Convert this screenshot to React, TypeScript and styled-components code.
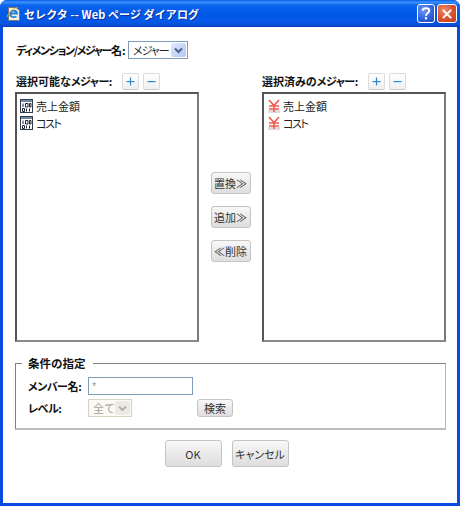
import React from "react";
import styled, { createGlobalStyle } from "styled-components";

const Global = createGlobalStyle`
  html, body { margin: 0; padding: 0; background: #fff; }
  body { font-family: "Noto Sans CJK JP", "Liberation Sans", sans-serif; }
`;

const Win = styled.div`
  width: 460px;
  height: 506px;
  display: flex;
  flex-direction: column;
  box-sizing: border-box;
  border-radius: 7px 7px 0 0;
  background: #0a4ae0;
  overflow: hidden;
`;
const TitleBar = styled.div`
  height: 27px;
  flex: none;
  display: flex;
  align-items: center;
  box-sizing: border-box;
  padding: 0 3px 0 5px;
  gap: 2px;
  background: linear-gradient(180deg, #0a5be6 0%, #3a93ff 8%, #0f66ee 18%, #0058e6 50%, #0559e8 80%, #0a4fd8 92%, #0a3fc0 100%);
`;
const TitleText = styled.div`
  flex: 1;
  color: #fff;
  font-size: 11px;
  font-weight: 700;
  letter-spacing: 0.1px;
  white-space: pre;
  text-shadow: 1px 1px 0 #0f2f9c;
`;
const CapBtn = styled.div<{ $close?: boolean }>`
  width: ${(p) => (p.$close ? 20 : 18)}px;
  height: 19px;
  box-sizing: border-box;
  border: 1px solid #fff;
  border-radius: 3px;
  display: flex;
  align-items: center;
  justify-content: center;
  background: ${(p) =>
    p.$close
      ? "radial-gradient(circle at 35% 30%, #ee8a6c, #d9502c 55%, #c23a1a)"
      : "radial-gradient(circle at 35% 30%, #6f96f2, #2c5fdd 60%, #1f49bf)"};
`;
const Client = styled.div`
  flex: 1;
  margin: 0 3px 3px;
  background: #fff;
  box-sizing: border-box;
  padding: 14px 11px 0 12px;
  display: flex;
  flex-direction: column;
`;
const DimRow = styled.div`
  display: flex;
  align-items: center;
  height: 18px;
  padding-left: 1px;
`;
const Label = styled.span`
  font-size: 11px;
  font-weight: 700;
  color: #111;
  white-space: nowrap;
  line-height: 16px;
  font-feature-settings: "palt";
`;
const Kana = styled.span<{ $t?: number }>`
  letter-spacing: ${(p) => p.$t ?? -0.5}px;
  font-feature-settings: "palt";
`;
const DimLabel = styled(Label)`
  width: 112px;
  flex: none;
`;
const FakeSelect = styled.div<{ $w: number; $disabled?: boolean }>`
  width: ${(p) => p.$w}px;
  height: 18px;
  flex: none;
  box-sizing: border-box;
  border: 1px solid ${(p) => (p.$disabled ? "#d6d3c4" : "#7f9db9")};
  background: ${(p) => (p.$disabled ? "#faf9f4" : "#fff")};
  color: ${(p) => (p.$disabled ? "#a5a295" : "#222")};
  display: flex;
  align-items: center;
  justify-content: space-between;
  font-size: 11px;
  line-height: 16px;
  padding-left: 4px;
  white-space: nowrap;
`;
const SelectArrow = styled.div<{ $disabled?: boolean }>`
  width: 15px;
  height: 14px;
  flex: none;
  margin-right: 1px;
  border-radius: 2px;
  display: flex;
  align-items: center;
  justify-content: center;
  background: ${(p) => (p.$disabled ? "#ecebe3" : "linear-gradient(135deg,#e1eafe,#b0c6f5)")};
`;
const Columns = styled.div`
  display: grid;
  grid-template-columns: 184px 63px 184px;
  margin-top: 13px;
`;
const Col = styled.div`
  display: flex;
  flex-direction: column;
`;
const ColHead = styled.div<{ $inset?: number }>`
  height: 18px;
  margin-bottom: 2px;
  display: flex;
  align-items: center;
  padding-left: ${(p) => p.$inset ?? 0}px;
`;
const HeadLabel = styled(Label)`
  width: 105px;
  flex: none;
  margin-right: 1px;
`;
const PlusBtn = styled.div`
  width: 17px;
  height: 17px;
  margin-right: 4px;
  box-sizing: border-box;
  border: 1px solid #dcdcdc;
  border-bottom-color: #c8c8c8;
  border-radius: 2px;
  background: linear-gradient(180deg, #fff, #f0f0f0);
  display: flex;
  align-items: center;
  justify-content: center;
`;
const List = styled.div`
  height: 250px;
  box-sizing: border-box;
  border: 2px solid;
  border-color: #555 #7a7a7a #8a8a8a #555;
  padding: 3px 3px;
  background: #fff;
`;
const ListItem = styled.div`
  height: 17px;
  display: flex;
  align-items: center;
  gap: 2px;
  font-size: 11px;
  color: #222;
  white-space: nowrap;
  font-feature-settings: "palt";
`;
const Middle = styled.div`
  display: flex;
  flex-direction: column;
  align-items: center;
  gap: 12px;
  padding-top: 100px;
`;
const GrayBtn = styled.div<{ $w?: number; $h?: number }>`
  width: ${(p) => p.$w ?? 40}px;
  height: ${(p) => p.$h ?? 22}px;
  box-sizing: border-box;
  border: 1px solid #c4c4c4;
  border-radius: 3px;
  background: linear-gradient(180deg, #f8f8f8 0%, #e9e9e9 55%, #dedede 100%);
  color: #333;
  font-size: 11px;
  display: flex;
  align-items: center;
  justify-content: center;
  white-space: nowrap;
  font-feature-settings: "palt";
`;
const Fieldset = styled.div`
  position: relative;
  margin-top: 21px;
  height: 67px;
  box-sizing: border-box;
  border: 1px solid #808080;
  border-right: 1px solid #b8b8b8;
  border-bottom: 2px solid #bdbdbd;
  padding: 13px 12px 0;
  display: flex;
  flex-direction: column;
  gap: 4px;
`;
const Legend = styled.div`
  position: absolute;
  left: 6px;
  top: -9px;
  padding: 0 7px 0 6px;
  background: #fff;
  font-size: 11.5px;
  font-weight: 700;
  color: #111;
  line-height: 16px;
`;
const FieldRow = styled.div`
  display: flex;
  align-items: center;
  height: 18px;
`;
const FieldLabel = styled(Label)`
  width: 60px;
  flex: none;
`;
const TextInput = styled.input`
  width: 105px;
  height: 18px;
  box-sizing: border-box;
  border: 1px solid #7f9db9;
  padding: 0 3px;
  font-family: "Liberation Sans", sans-serif;
  font-size: 11px;
  color: #999;
  background: #fff;
  outline: none;
`;
const SearchWrap = styled.div`
  margin-left: 65px;
`;
const Actions = styled.div`
  display: flex;
  justify-content: center;
  gap: 10px;
  margin-top: 10px;
  padding-right: 8px;
`;

const Plus = ({ minus }: { minus?: boolean }) => (
  <svg width="9" height="9" viewBox="0 0 9 9">
    <rect x="0.5" y="4" width="8" height="1.2" fill="#2a8ad6" />
    {!minus && <rect x="3.9" y="0.5" width="1.2" height="8" fill="#2a8ad6" />}
  </svg>
);

const Chevron = ({ color }: { color: string }) => (
  <svg width="9" height="7" viewBox="0 0 9 7">
    <path d="M1 1.5 L4.5 5 L8 1.5" fill="none" stroke={color} strokeWidth="2" />
  </svg>
);

const MeasureIcon = () => (
  <svg width="14" height="14" viewBox="0 0 14 14">
    <rect x="0.5" y="0.5" width="12" height="13" fill="#fff" stroke="#2f3d4d" />
    <rect x="1" y="1" width="11" height="2" fill="#6f88a6" />
    <path d="M3 4.5v3.5M5.5 4.5h2.5v3.5H5.5zM9.5 4.5h1.5v3.5H9.5zM2.5 9.5h2v3h-2zM6.5 9.5v3M9.5 9.5v3" fill="none" stroke="#1e2833" strokeWidth="1" />
  </svg>
);

const YenIcon = () => (
  <svg width="14" height="14" viewBox="0 0 14 14">
    <rect x="1" y="11" width="12" height="3" fill="#dcdcdc" />
    <path d="M2 1 L7 6.5 L12 1 M7 6.5 V13 M2 7 H12 M2 10 H12" fill="none" stroke="#ee5a50" strokeWidth="1.6" />
  </svg>
);

const IEIcon = () => (
  <svg width="17" height="17" viewBox="0 0 17 17">
    <path d="M3.5 2.5 H11 L14.5 5.5 V15.5 H3.5 Z" fill="#f3efe2" stroke="#7a7666" />
    <path d="M5 8.5 H12 C12 5.5 7 4.5 5.5 7.5 C4.2 10.5 7 13.5 11.5 11.5" fill="none" stroke="#1f7fd8" strokeWidth="1.8" />
    <path d="M2 12 C4 6 10 2 13 3" fill="none" stroke="#f0b020" strokeWidth="0.9" />
  </svg>
);

const Item = ({ icon, text }: { icon: React.ReactNode; text: string }) => (
  <ListItem>
    {icon}
    {text === "コスト" ? <Kana $t={-1.5}>{text}</Kana> : text}
  </ListItem>
);

export default function App() {
  return (
    <>
      <Global />
      <Win>
        <TitleBar>
          <IEIcon />
          <TitleText>セレクタ -- Web ページ ダイアログ</TitleText>
          <CapBtn>
            <svg width="12" height="15" viewBox="0 0 13 15">
              <path d="M3 4.5 C3 1 10 1 10 4.5 C10 7 6.5 7 6.5 10" fill="none" stroke="#fff" strokeWidth="2.2" />
              <rect x="5.3" y="11.5" width="2.4" height="2.4" fill="#fff" />
            </svg>
          </CapBtn>
          <CapBtn $close>
            <svg width="12" height="12" viewBox="0 0 13 13">
              <path d="M2 2 L11 11 M11 2 L2 11" stroke="#fff" strokeWidth="2.2" />
            </svg>
          </CapBtn>
        </TitleBar>
        <Client>
          <DimRow>
            <DimLabel><Kana $t={-1.4}>ディメンション/メジャー</Kana>名:</DimLabel>
            <FakeSelect $w={60}>
              <Kana $t={-1}>メジャー</Kana>
              <SelectArrow>
                <Chevron color="#4d6185" />
              </SelectArrow>
            </FakeSelect>
          </DimRow>
          <Columns>
            <Col>
              <ColHead $inset={1}>
                <HeadLabel>選択可能な<Kana>メジャー</Kana>:</HeadLabel>
                <PlusBtn><Plus /></PlusBtn>
                <PlusBtn><Plus minus /></PlusBtn>
              </ColHead>
              <List>
                <Item icon={<MeasureIcon />} text="売上金額" />
                <Item icon={<MeasureIcon />} text="コスト" />
              </List>
            </Col>
            <Middle>
              <GrayBtn>置換≫</GrayBtn>
              <GrayBtn>追加≫</GrayBtn>
              <GrayBtn>≪削除</GrayBtn>
            </Middle>
            <Col>
              <ColHead>
                <HeadLabel>選択済みの<Kana>メジャー</Kana>:</HeadLabel>
                <PlusBtn><Plus /></PlusBtn>
                <PlusBtn><Plus minus /></PlusBtn>
              </ColHead>
              <List>
                <Item icon={<YenIcon />} text="売上金額" />
                <Item icon={<YenIcon />} text="コスト" />
              </List>
            </Col>
          </Columns>
          <Fieldset>
            <Legend>条件の指定</Legend>
            <FieldRow>
              <FieldLabel><Kana>メンバー</Kana>名:</FieldLabel>
              <TextInput defaultValue="*" />
            </FieldRow>
            <FieldRow>
              <FieldLabel><Kana>レベル</Kana>:</FieldLabel>
              <FakeSelect $w={44} $disabled>
                全て
                <SelectArrow $disabled>
                  <Chevron color="#b5b3a6" />
                </SelectArrow>
              </FakeSelect>
              <SearchWrap>
                <GrayBtn $w={36} $h={18}>検索</GrayBtn>
              </SearchWrap>
            </FieldRow>
          </Fieldset>
          <Actions>
            <GrayBtn $w={57} $h={27}>OK</GrayBtn>
            <GrayBtn $w={57} $h={27}>キャンセル</GrayBtn>
          </Actions>
        </Client>
      </Win>
    </>
  );
}
